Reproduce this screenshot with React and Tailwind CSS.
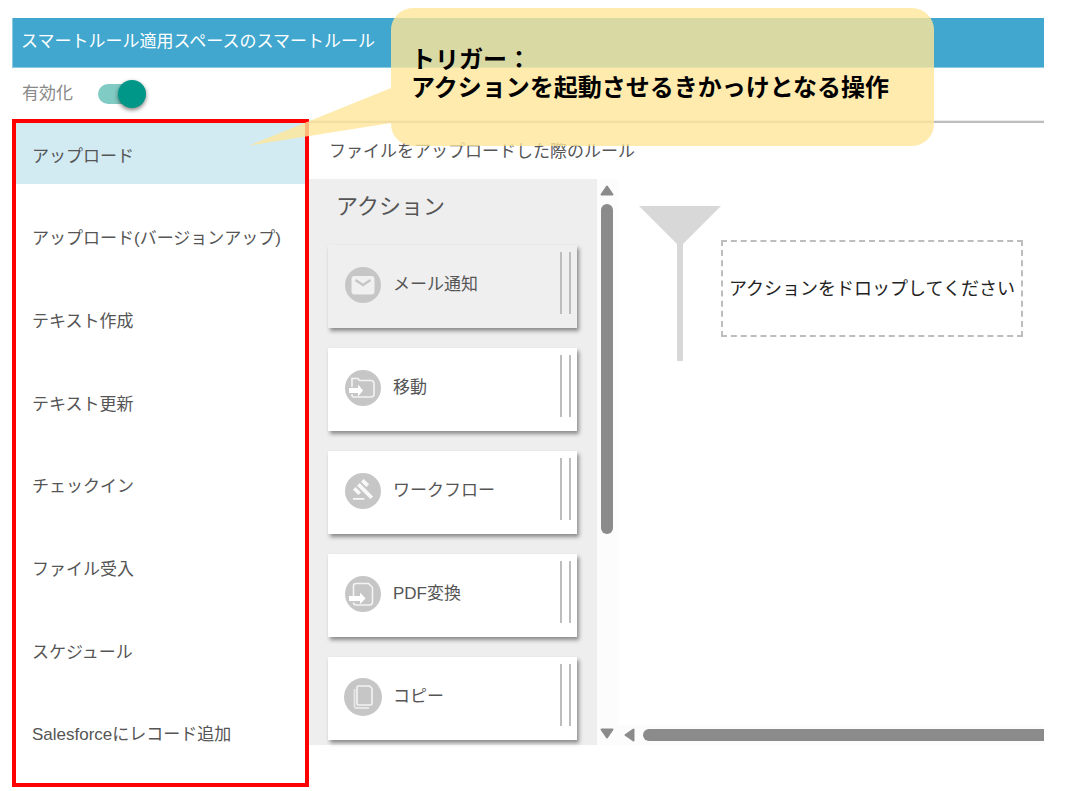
import React, { useState } from "react";

const triggers = [
  "アップロード",
  "アップロード(バージョンアップ)",
  "テキスト作成",
  "テキスト更新",
  "チェックイン",
  "ファイル受入",
  "スケジュール",
  "Salesforceにレコード追加",
];

const MailIcon = ({ bg }) => (
  <svg className="w-9 h-9 shrink-0" viewBox="0 0 36 36">
    <circle cx="18" cy="18" r="18" fill="#c6c6c6" />
    <rect x="6.5" y="9" width="23" height="18.500" rx="3" fill={bg} />
    <path d="M10.500 13l7.500 5 7.500-5" fill="none" stroke="#c6c6c6" strokeWidth="2.400" />
  </svg>
);

const MoveIcon = () => (
  <svg className="w-9 h-9 shrink-0" viewBox="0 0 36 36">
    <circle cx="18" cy="18" r="18" fill="#c6c6c6" />
    <path
      d="M7 17V8.500h6l1.500 2H26a3 3 0 0 1 3 3V24a3 3 0 0 1-3 3H8.500A1.500 1.500 0 0 1 7 25.500V24"
      fill="none"
      stroke="#f4f4f4"
      strokeWidth="1.600"
    />
    <path d="M4 18h9v-3.500l5 6-5 6V23H4z" fill="#fff" />
  </svg>
);

const WorkflowIcon = () => (
  <svg className="w-9 h-9 shrink-0" viewBox="0 0 36 36">
    <circle cx="18" cy="18" r="18" fill="#c6c6c6" />
    <path
      transform="translate(7 5) scale(0.95)"
      d="M1 21h12v2H1zM5.245 8.070l2.830-2.827 14.140 14.142-2.828 2.828zM12.317 1l5.657 5.656-2.830 2.830-5.654-5.660zM3.825 9.485l5.657 5.657-2.828 2.828-5.657-5.657z"
      fill="#f8f8f8"
    />
  </svg>
);

const PdfIcon = () => (
  <svg className="w-9 h-9 shrink-0" viewBox="0 0 36 36">
    <circle cx="18" cy="18" r="18" fill="#c6c6c6" />
    <path
      d="M8.500 20v-10a2.500 2.500 0 0 1 2.500-2.500h12.500l4 4V26a3 3 0 0 1-3 3H11a2.500 2.500 0 0 1-2.500-2.500"
      fill="none"
      stroke="#f4f4f4"
      strokeWidth="1.600"
    />
    <path d="M4 20h11v-3.500l5.500 6-5.500 5.500V25H4z" fill="#fff" />
  </svg>
);

const CopyIcon = () => (
  <svg className="w-9 h-9 shrink-0 overflow-visible" viewBox="0 0 36 36">
    <circle cx="18" cy="18" r="19" fill="#c6c6c6" />
    <path d="M9.500 10v17.500a1.500 1.500 0 0 0 1.500 1.500h13" fill="none" stroke="#e6e6e6" strokeWidth="1.800" />
    <path
      d="M13.500 7h11l2.500 2.500v15a1.500 1.500 0 0 1-1.500 1.500H13.500a1.500 1.500 0 0 1-1.500-1.500V8.500a1.500 1.500 0 0 1 1.500-1.500z"
      fill="none"
      stroke="#f4f4f4"
      strokeWidth="1.600"
    />
  </svg>
);

const ActionCard = ({ label, icon, className }) => (
  <div
    className={`flex items-center h-[83px] pl-[17px] pr-1.5 pb-[3px] cursor-move shadow-[2px_3px_4px_rgba(0,0,0,0.42)] ${className}`}
  >
    {icon}
    <span className="flex-1 pl-3">{label}</span>
    {/* drag handle */}
    <div className="self-start mt-[7px] h-[62px] w-[11px] border-x-2 border-[#bdbdbd]" />
  </div>
);

const Callout = () => (
  <div className="absolute left-[391px] top-2 w-[543px] h-[138px] pl-5 pt-[38px] rounded-[22px] bg-[#ffe699]/80 pointer-events-none">
    <svg className="absolute right-full top-20 w-[142px] h-[60px]" viewBox="0 0 142 60">
      <path d="M142 0v35L0 57.500z" fill="#ffe699" fillOpacity="0.8" />
    </svg>
    <p className="text-2xl leading-7 font-bold text-black">
      トリガー：
      <br />
      アクションを起動させるきかっけとなる操作
    </p>
  </div>
);

const App = () => {
  const [selected, setSelected] = useState(0);
  const [enabled, setEnabled] = useState(true);

  return (
    <div className="relative min-h-screen flex flex-col pt-[18px] pb-1 pl-3 pr-[21px] bg-white font-['Liberation_Sans','Noto_Sans_CJK_JP',sans-serif] text-[17px] leading-6 text-[#555]">
      <header className="h-[50px] pl-2 pb-0.5 flex items-center bg-[#41a7ce] border-l border-b border-[#8ccbe2]">
        <h1 className="text-white">スマートルール適用スペースのスマートルール</h1>
      </header>

      <div className="h-[51px] pl-[10px] flex items-center gap-[25px]">
        <label htmlFor="enabled" className="text-[#888]">有効化</label>
        <input
          id="enabled"
          type="checkbox"
          checked={enabled}
          onChange={(e) => setEnabled(e.target.checked)}
          className="relative appearance-none w-12 h-5 rounded-full bg-gray-300 checked:bg-[#80cbc4] cursor-pointer before:absolute before:left-0 before:-top-1 before:w-7 before:h-7 before:rounded-full before:bg-gray-100 before:shadow-[0_2px_4px_rgba(0,0,0,0.5)] checked:before:left-5 checked:before:bg-[#009688]"
        />
      </div>

      <main className="flex-1 flex">
        {/* Triggers */}
        <nav className="w-[297px] shrink-0 border-4 border-[#ff0000] pb-5 flex">
          <ul className="flex-1 flex flex-col justify-between">
            {triggers.map((name, i) => (
              <li key={name}>
                <button
                  onClick={() => setSelected(i)}
                  className={`w-full h-[61px] pt-1.5 pl-4 text-left ${i === selected ? "bg-[#d2eaf2]" : "bg-white"}`}
                >
                  {name}
                </button>
              </li>
            ))}
          </ul>
        </nav>

        <section className="flex-1 min-w-0 pt-px">
          <div className="h-[3px] bg-[#bdbdbd] border-t border-[#ececec]" />
          <h2 className="h-14 pl-5 pt-0.5 flex items-center">ファイルをアップロードした際のルール</h2>

          <div className="flex">
            {/* Actions */}
            <div className="w-72 shrink-0 bg-[#eee] pl-[19px] pr-5 pb-[5px]">
              <h3 className="h-[66px] pl-2 pt-3 text-[22px] leading-8">アクション</h3>
              <div className="flex flex-col gap-5">
                <ActionCard label="メール通知" icon={<MailIcon bg="#f0f0f0" />} className="bg-[#efefef]" />
                <ActionCard label="移動" icon={<MoveIcon />} className="bg-white" />
                <ActionCard label="ワークフロー" icon={<WorkflowIcon />} className="bg-white" />
                <ActionCard label="PDF変換" icon={<PdfIcon />} className="bg-white" />
                <ActionCard label="コピー" icon={<CopyIcon />} className="bg-white" />
              </div>
            </div>

            {/* Vertical scrollbar */}
            <div className="w-[21px] shrink-0 flex flex-col items-center justify-between py-1.5 pr-px bg-[#fcfcfc]">
              <div className="flex flex-col items-center gap-2">
                <svg className="w-3.5 h-[11px]" viewBox="0 0 14 11">
                  <path d="M7 1.500L12.500 9.500h-11z" fill="#8b8b8b" stroke="#8b8b8b" strokeWidth="2" strokeLinejoin="round" />
                </svg>
                <div className="w-3 h-[330px] rounded-full bg-[#8b8b8b]" />
              </div>
              <svg className="w-3.5 h-[11px]" viewBox="0 0 14 11">
                <path d="M7 9.500L1.500 1.500h11z" fill="#8b8b8b" stroke="#8b8b8b" strokeWidth="2" strokeLinejoin="round" />
              </svg>
            </div>

            {/* Canvas */}
            <div className="flex-1 min-w-0 flex flex-col justify-between">
              <div className="flex pl-[21px] pt-[27px]">
                <svg className="w-[82px] h-[155px] shrink-0" viewBox="0 0 82 155">
                  <path d="M0 0h82L44 38v117h-6V38z" fill="#d8d8d8" />
                </svg>
                <div className="self-start mt-[34px] h-[97px] px-1.5 flex items-center border-2 border-dashed border-[#bdbdbd] text-lg text-[#222] whitespace-nowrap">
                  アクションをドロップしてください
                </div>
              </div>
              <div className="h-5 pl-1.5 flex items-center gap-2 bg-[#fcfcfc]">
                <svg className="w-[11px] h-3.5 shrink-0" viewBox="0 0 11 14">
                  <path d="M1.500 7L9.500 1.500v11z" fill="#8b8b8b" stroke="#8b8b8b" strokeWidth="2" strokeLinejoin="round" />
                </svg>
                <div className="flex-1 h-3 rounded-l-full bg-[#8b8b8b]" />
              </div>
            </div>
          </div>
        </section>
      </main>

      <Callout />
    </div>
  );
};

export default App;
